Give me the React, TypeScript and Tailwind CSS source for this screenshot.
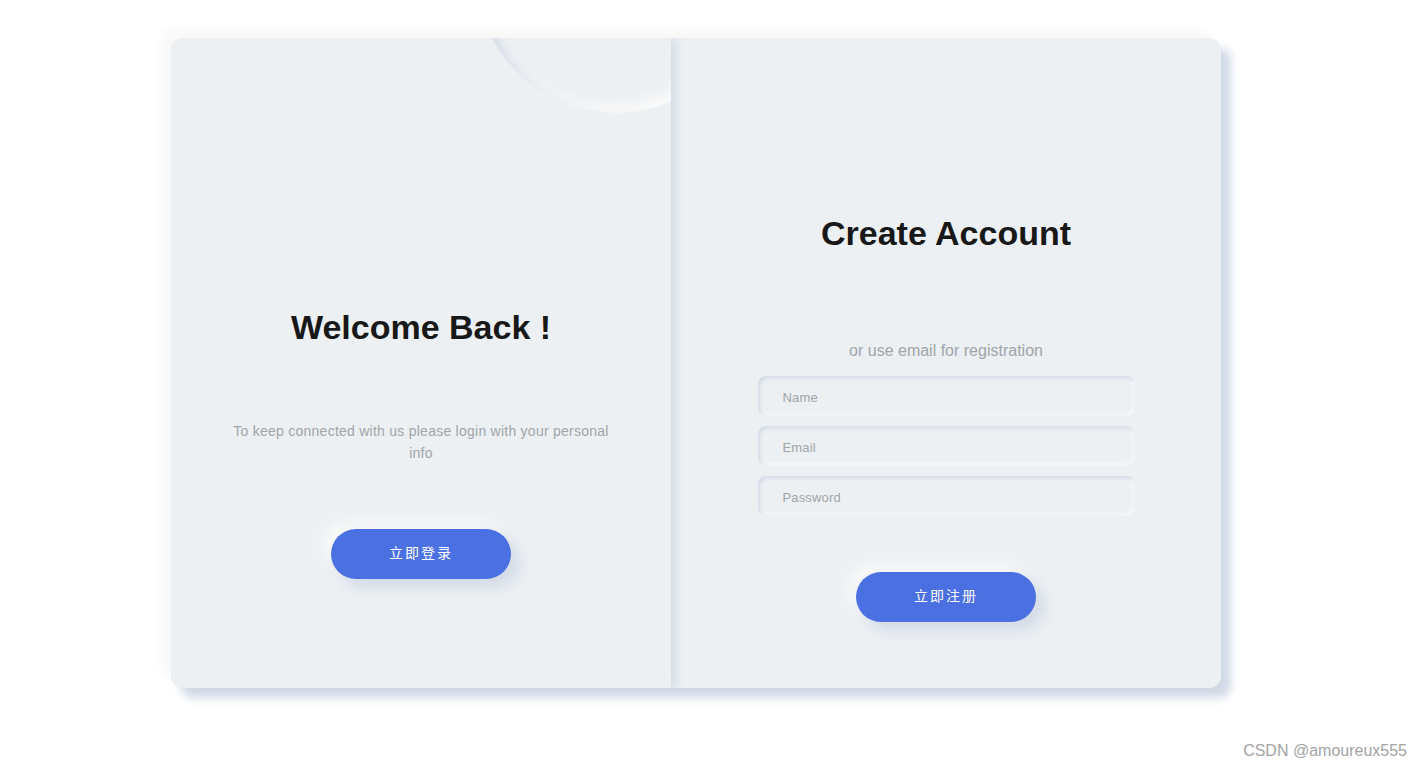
import React from "react";

const sans = { fontFamily: '"Liberation Sans", Arial, "Noto Sans CJK SC", sans-serif' };
const cjk = { fontFamily: '"Noto Sans CJK SC", "Liberation Sans", sans-serif' };

function Field({ placeholder, type = "text" }: { placeholder: string; type?: string }) {
  return (
    <input
      type={type}
      placeholder={placeholder}
      style={sans}
      className="my-[5px] block h-[40px] w-[377px] rounded-[8px] border-none bg-[#ecf0f3] pl-[25px] pt-[2px] text-[13px] tracking-[0.15px] text-[#181818] outline-none shadow-[inset_2px_2px_4px_#d1d9e6,inset_-2px_-2px_4px_#f9f9f9] placeholder:text-[#a0a5a8]"
    />
  );
}

function PillButton({ label }: { label: string }) {
  return (
    <button
      style={cjk}
      className="flex h-[50px] w-[180px] items-center justify-center rounded-[25px] border-none bg-[#4b70e2] pb-[3px] text-[14px] tracking-[2px] text-white shadow-[8px_8px_16px_#d1d9e6,-8px_-8px_16px_#f9f9f9]"
    >
      {label}
    </button>
  );
}

export default function App() {
  return (
    <div className="relative min-h-[766px] w-full bg-white" style={sans}>
      <div className="pl-[171px] pt-[38px]">
        <div className="flex h-[650px] w-[1050px] overflow-hidden rounded-[12px] bg-[#ecf0f3] shadow-[10px_10px_10px_#d1d9e6,-10px_-10px_10px_#f9f9f9]">
          {/* Left panel */}
          <div className="relative z-10 flex h-full w-[500px] shrink-0 flex-col items-center overflow-hidden bg-[#ecf0f3] px-[55px] pt-[238px] shadow-[4px_0_10px_#d1d9e6]">
            <div className="absolute left-[305px] top-[-205px] h-[280px] w-[280px] rounded-full bg-[#ecf0f3] shadow-[inset_8px_8px_12px_#d1d9e6,inset_-8px_-8px_12px_#f9f9f9]" />
            <h2 className="relative text-[34px] font-bold leading-[102px] text-[#181818]">Welcome Back !</h2>
            <p className="relative mt-[42px] text-center text-[14px] leading-[22px] tracking-[0.25px] text-[#a0a5a8]">
              To keep connected with us please login with your personal info
            </p>
            <div className="relative mt-[65px]">
              <PillButton label="立即登录" />
            </div>
          </div>
          {/* Right panel */}
          <div className="flex h-full flex-1 flex-col items-center pt-[144px]">
            <h2 className="text-[34px] font-bold leading-[102px] text-[#181818]">Create Account</h2>
            <span className="mt-[57px] text-[16px] leading-[20px] text-[#a0a5a8]">or use email for registration</span>
            <div className="mt-[10px] flex flex-col">
              <Field placeholder="Name" />
              <Field placeholder="Email" type="email" />
              <Field placeholder="Password" type="password" />
            </div>
            <div className="mt-[51px]">
              <PillButton label="立即注册" />
            </div>
          </div>
        </div>
      </div>
      <div className="absolute bottom-[6px] right-[15px] text-[16px] leading-[18px] text-[#a3a3a3]">CSDN @amoureux555</div>
    </div>
  );
}
